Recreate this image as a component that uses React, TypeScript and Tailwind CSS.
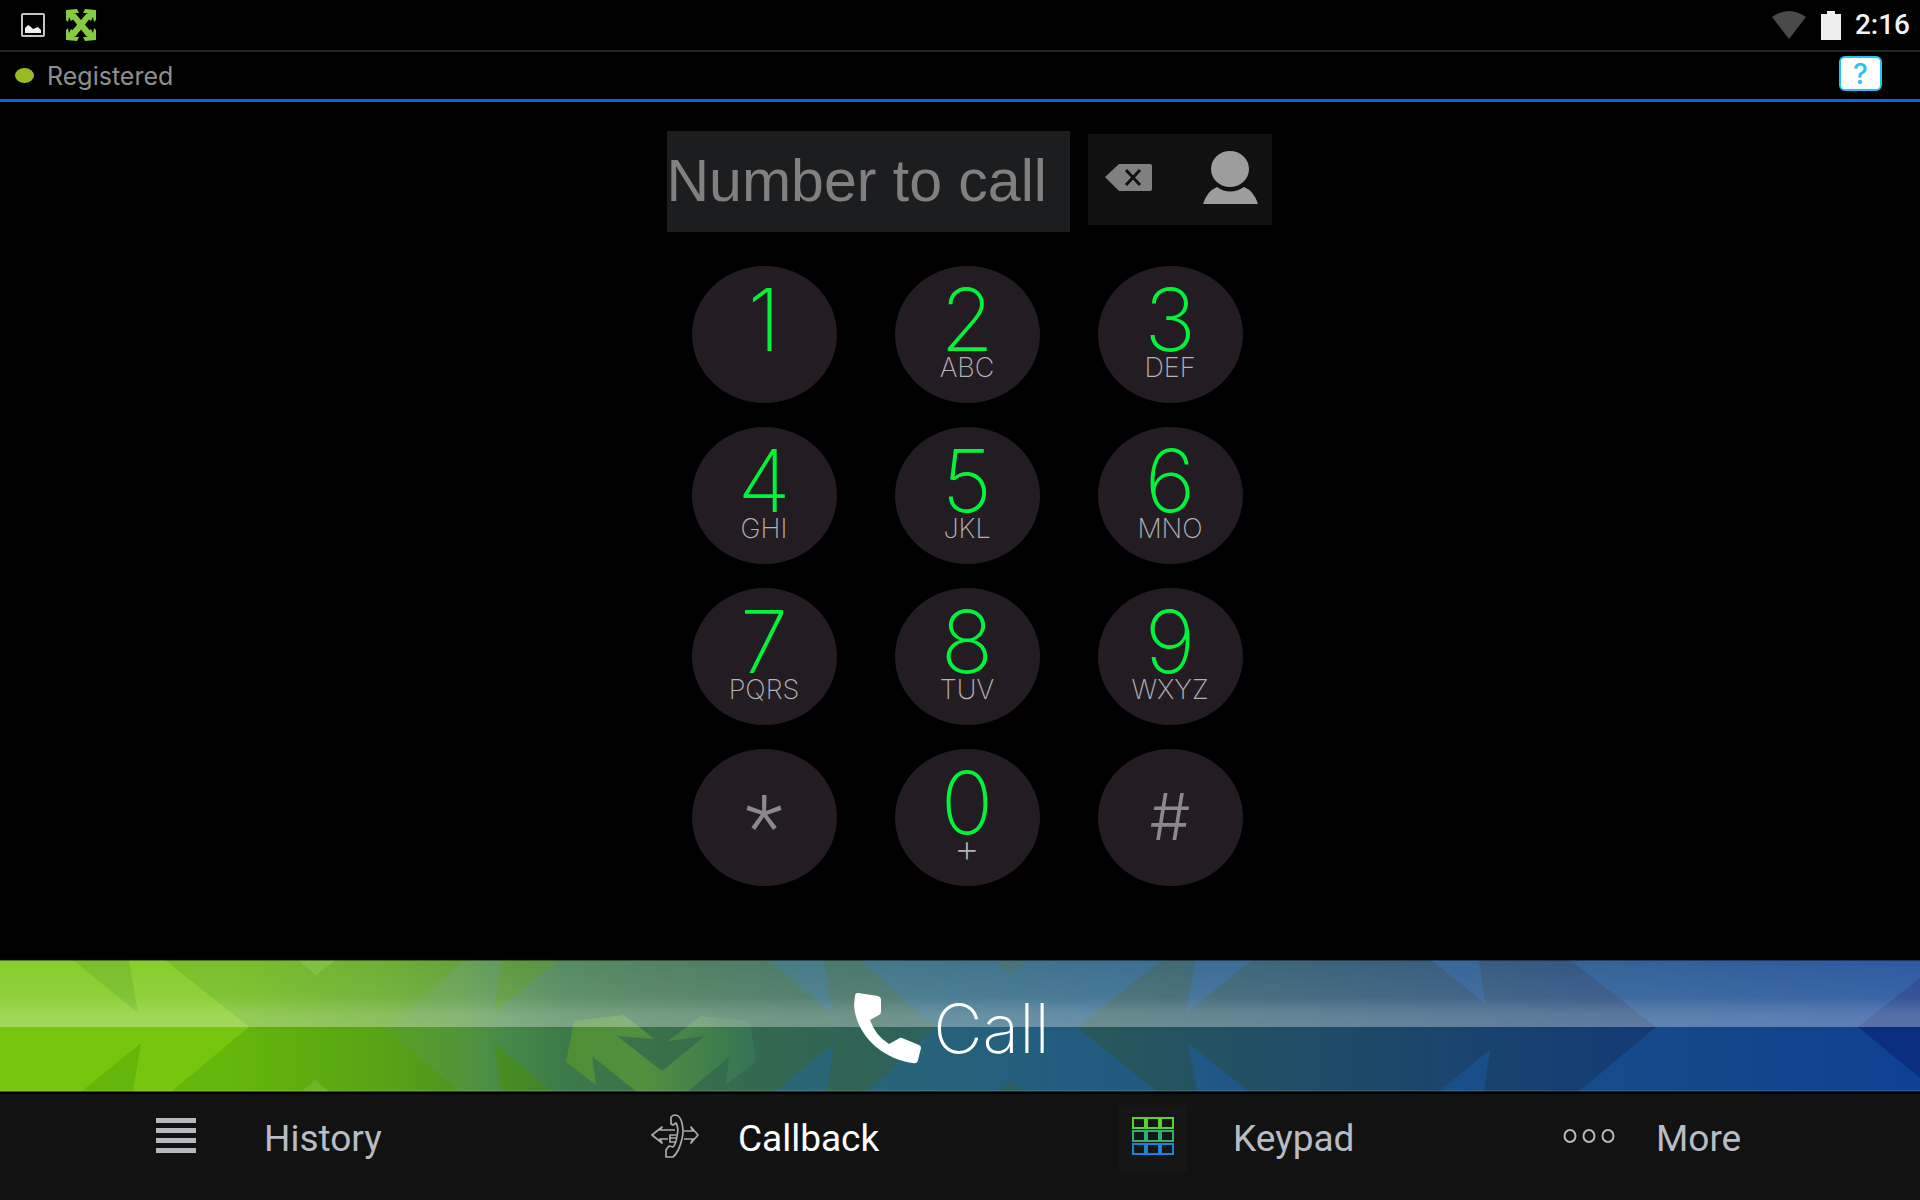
import React from 'react';

interface DialKey {
  digit: string;
  letters?: string;
}

const dialKeys: DialKey[] = [
  { digit: '1' },
  { digit: '2', letters: 'ABC' },
  { digit: '3', letters: 'DEF' },
  { digit: '4', letters: 'GHI' },
  { digit: '5', letters: 'JKL' },
  { digit: '6', letters: 'MNO' },
  { digit: '7', letters: 'PQRS' },
  { digit: '8', letters: 'TUV' },
  { digit: '9', letters: 'WXYZ' },
  { digit: '*' },
  { digit: '0', letters: '+' },
  { digit: '#' }
];

const ScreenshotIcon = () => (
  <svg className="w-6 h-6" viewBox="0 0 24 24" fill="none">
    <rect x="1" y="1" width="22" height="22" rx="1" stroke="#c4c4c4" strokeWidth="2" />
    <path d="M4 20V15L7 12L10 14L12 16L17 14L20 17V20Z" fill="#f0f0f0" />
  </svg>
);

const AppLogo = () => (
  <svg className="w-[30px] h-8" viewBox="0 0 30 32">
    <g fill="#86cb45">
      <path d="M5 8L9 4L26 24L21 28Z" />
      <path d="M25 8L21 4L4 24L9 28Z" />
      <path d="M0 1L11 0L13 4L8 4L10 8L5 12L3 8L2 13L0 11Z" />
      <path d="M30 1L19 0L17 4L22 4L20 8L25 12L27 8L28 13L30 11Z" />
      <path d="M0 31L11 32L13 28L8 28L10 24L5 20L3 24L2 19L0 21Z" />
      <path d="M30 31L19 32L17 28L22 28L20 24L25 20L27 24L28 19L30 21Z" />
    </g>
  </svg>
);

const WifiIcon = () => (
  <svg className="w-[34px] h-7" viewBox="0 0 34 28">
    <path d="M0 6Q17 -6 34 6L17 28Z" fill="#4a4a4a" />
  </svg>
);

const BatteryIcon = () => (
  <svg className="w-5 h-[29px]" viewBox="0 0 20 29">
    <path d="M6 0H14V3H20V29H0V3H6Z" fill="#eeeeee" />
  </svg>
);

const BackspaceIcon = () => (
  <svg className="w-12 h-7" viewBox="0 0 48 28">
    <path d="M14 0H45Q47 0 47 2V25Q47 27 45 27H14L0 13Z" fill="#808080" />
    <path d="M21 6L35 21M35 6L21 21" stroke="#111111" strokeWidth="3" />
  </svg>
);

const ContactIcon = () => (
  <svg className="w-14 h-[54px]" viewBox="0 0 56 54">
    <path d="M0 53Q4 40 14 36Q27 45 41 36Q51 40 55 53Z" fill="#9d9d9d" />
    <ellipse cx="27" cy="18" rx="19" ry="18" fill="#9d9d9d" />
  </svg>
);

const HandsetIcon = () => (
  <svg className="w-[67px] h-[71px]" viewBox="0 0 67 71">
    <path
      d="M4 0L24 3Q27 4 27 7V19Q27 21 25 22L16 27Q21 42 35 51L44 46Q46 44 48 45L65 52Q67 53 67 55L64 67Q63 71 59 70C28 66 2 42 0 12L1 3Q1 0 4 0Z"
      fill="#ffffff"
    />
  </svg>
);

const HistoryIcon = () => (
  <svg className="w-10 h-9" viewBox="0 0 40 36" fill="#b4b8bf">
    <rect y="0" width="40" height="5" />
    <rect y="10" width="40" height="5" />
    <rect y="20" width="40" height="5" />
    <rect y="30" width="40" height="5" />
  </svg>
);

const CallbackIcon = () => (
  <svg className="w-12 h-11" viewBox="0 0 48 44" fill="none" stroke="#a9abae" strokeWidth="1.7" strokeLinejoin="round">
    <path d="M20 10V3Q22 1 24 1Q29 1 31 9Q33 18 31 25Q28 38 22 43H15V36L18 32L22 33Q25 30 26 22Q28 14 25 9L22 11Z" />
    <path d="M24 16H9L11 13L1 21L11 29L9 25H17" />
    <path d="M25 21H19V28H24M18 24H25" />
    <path d="M33 17H42L40 13L47 21L40 29L42 25H33" />
  </svg>
);

const KeypadIcon = () => {
  const rows = [
    { y: 1, color: '#55d52b' },
    { y: 14, color: '#2fae78' },
    { y: 27, color: '#1d83d8' }
  ];
  return (
    <svg className="w-[42px] h-[38px]" viewBox="0 0 42 38" fill="none" strokeWidth="2">
      {rows.map((row) =>
        [1, 15, 29].map((x) => (
          <rect key={`${x}-${row.y}`} x={x} y={row.y} width="12" height="10" stroke={row.color} />
        ))
      )}
    </svg>
  );
};

const MoreIcon = () => (
  <svg className="w-[52px] h-4" viewBox="0 0 52 16" fill="none" stroke="#b4b8bf" strokeWidth="2">
    <ellipse cx="7" cy="8" rx="5.5" ry="6" />
    <ellipse cx="26" cy="8" rx="5.5" ry="6" />
    <ellipse cx="45" cy="8" rx="5.5" ry="6" />
  </svg>
);

// Arrow artwork behind the call button
const CallBackdrop = () => (
  <svg className="absolute inset-0 w-full h-full" viewBox="0 0 1920 132" preserveAspectRatio="none">
    <defs>
      <linearGradient id="base" gradientUnits="userSpaceOnUse" x1="0" x2="1920" y1="0" y2="0">
        <stop offset="0.12" stopColor="#65b60a" />
        <stop offset="0.2" stopColor="#57a316" />
        <stop offset="0.28" stopColor="#438627" />
        <stop offset="0.41" stopColor="#2b6874" />
        <stop offset="0.57" stopColor="#215b80" />
        <stop offset="0.65" stopColor="#1f5688" />
        <stop offset="0.86" stopColor="#144a8a" />
        <stop offset="1" stopColor="#0e4193" />
      </linearGradient>
      <linearGradient id="middle" gradientUnits="userSpaceOnUse" x1="383" x2="936" y1="0" y2="0">
        <stop offset="0" stopColor="#58a021" />
        <stop offset="0.14" stopColor="#529539" />
        <stop offset="0.22" stopColor="#478948" />
        <stop offset="0.33" stopColor="#3c7a4a" />
        <stop offset="0.5" stopColor="#39704a" />
        <stop offset="0.75" stopColor="#316651" />
        <stop offset="1" stopColor="#2d615d" />
      </linearGradient>
      <linearGradient id="right" gradientUnits="userSpaceOnUse" x1="1077" x2="1656" y1="0" y2="0">
        <stop offset="0" stopColor="#27595a" />
        <stop offset="0.35" stopColor="#204e66" />
        <stop offset="1" stopColor="#133a75" />
      </linearGradient>
      <linearGradient id="mark" gradientUnits="userSpaceOnUse" x1="566" x2="756" y1="0" y2="0">
        <stop offset="0" stopColor="#4f8f33" />
        <stop offset="0.4" stopColor="#52903f" />
        <stop offset="1" stopColor="#347355" />
      </linearGradient>
      <linearGradient id="gloss" x1="0" x2="0" y1="0" y2="1">
        <stop offset="0" stopColor="#ffffff" stopOpacity="0.13" />
        <stop offset="0.55" stopColor="#ffffff" stopOpacity="0.18" />
        <stop offset="0.8" stopColor="#ffffff" stopOpacity="0.3" />
        <stop offset="1" stopColor="#ffffff" stopOpacity="0.32" />
      </linearGradient>
    </defs>
    <rect width="1920" height="132" fill="url(#base)" />
    <path d="M0 0H73L138 53L129 0H165L249 67L171 132H133L141 83L81 132H0Z" fill="#76c60f" />
    <path d="M298 0H336L316 15ZM301 132H330L315 120Z" fill="#6db625" />
    <path
      d="M383 67L466 0H501L494 53L558 0H768L832 53L825 0H860L936 67L866 132H827L834 83L774 132H553L494 83L501 132H461Z"
      fill="url(#middle)"
    />
    <path d="M994 0H1029L1011 15ZM997 132H1024L1010 120Z" fill="#2b5f63" />
    <path
      d="M1077 67L1162 0H1195L1186 53L1252 0H1431L1485 43L1479 0H1570L1656 67L1578 132H1484L1490 90L1438 132H1249L1188 83L1197 132H1157Z"
      fill="url(#right)"
    />
    <path d="M1858 67L1920 18V118Z" fill="#0a2f80" />
    <path
      d="M566 102L574 61L624 55L654 79L617 76L662 111L705 76L668 81L701 56L750 61L756 101L726 125L729 97L687 132H637L592 96L596 125Z"
      fill="url(#mark)"
    />
    <rect width="1920" height="67" fill="url(#gloss)" />
    <rect width="1920" height="1" fill="#000000" fillOpacity="0.4" />
    <rect y="130" width="1920" height="1" fill="#ffffff" fillOpacity="0.1" />
    <rect y="131" width="1920" height="1" fill="#000000" fillOpacity="0.5" />
  </svg>
);

const DialKeyLabel = ({ digit, letters }: DialKey) => {
  if (digit === '*') {
    return <span className="pt-[22px] font-['Roboto',sans-serif] font-light text-[88px] leading-[112px] text-[#8a8a8a]">*</span>;
  }
  if (digit === '#') {
    return <span className="pt-9 font-light text-[64px] leading-[64px] text-[#8a8a8a]">#</span>;
  }
  return (
    <>
      <span className="pt-[14px] font-extralight text-[87px] leading-[80px] text-[#00f53a]">{digit}</span>
      {letters === '+' && <span className="font-extralight text-[40px] leading-[10px] text-[#b5b2b5]">+</span>}
      {letters && letters !== '+' && (
        <span className="font-extralight text-[27px] leading-4 text-[#b5b2b5]">{letters}</span>
      )}
    </>
  );
};

const navItems = [
  { label: 'History', icon: <HistoryIcon />, offset: 'pl-[142px]', gap: 'gap-[54px]', color: 'text-[#b9bcc4]', tile: '' },
  { label: 'Callback', icon: <CallbackIcon />, offset: 'pl-[161px]', gap: 'gap-[29px]', color: 'text-white', tile: '' },
  { label: 'Keypad', icon: <KeypadIcon />, offset: 'pl-[159px]', gap: 'gap-[46px]', color: 'text-[#b9bcc4]', tile: 'bg-[#161616]' },
  { label: 'More', icon: <MoreIcon />, offset: 'pl-[115px]', gap: 'gap-[33px]', color: 'text-[#b9bcc4]', tile: '' }
];

const App: React.FC = () => {
  return (
    <div className="min-h-screen flex flex-col bg-black font-['Inter',sans-serif]">
      {/* System status bar */}
      <header className="h-[52px] flex items-center justify-between border-b-2 border-[#20272a] pl-[21px] pr-[10px]">
        <div className="flex items-center gap-[21px]">
          <ScreenshotIcon />
          <AppLogo />
        </div>
        <div className="flex items-center">
          <WifiIcon />
          <div className="ml-[15px]">
            <BatteryIcon />
          </div>
          <span className="ml-[14px] font-['Roboto',sans-serif] font-medium text-[28px] leading-8 text-[#f2f2f2]">2:16</span>
        </div>
      </header>

      {/* Registration state */}
      <div className="h-[50px] flex items-center justify-between border-b-3 border-[#0863ee] pl-[15px] pr-[38px]">
        <div className="flex items-center gap-[13px]">
          <span className="w-[19px] h-[15px] rounded-[50%] bg-[#97bb22]" />
          <span className="text-[25px] leading-8 text-[#8f8f8f]">Registered</span>
        </div>
        <button
          type="button"
          aria-label="Help"
          className="mb-1 w-[43px] h-[35px] flex items-center justify-center rounded-md border-2 border-[#22c3f5] bg-white text-[28px] leading-8 font-medium text-[#20c4f4]"
        >
          ?
        </button>
      </div>

      <main className="flex-grow flex flex-col items-center pt-[29px] pl-[18px]">
        <div className="flex items-start gap-[18px]">
          <input
            type="text"
            aria-label="Number to call"
            placeholder="Number to call"
            className="w-[403px] h-[101px] pb-[2px] bg-[#1c1d1f] font-['Liberation_Sans',sans-serif] text-[59px] text-[#808080] placeholder:text-[#808080] outline-none"
          />
          <div className="mt-[3px] w-[184px] h-[91px] flex items-center justify-between pl-[17px] pr-[13px] pb-[3px] bg-[#111111]">
            <button type="button" aria-label="Delete">
              <BackspaceIcon />
            </button>
            <button type="button" aria-label="Contacts">
              <ContactIcon />
            </button>
          </div>
        </div>

        <div className="mt-[34px] mr-1 grid grid-cols-3 gap-x-[58px] gap-y-6">
          {dialKeys.map((key) => (
            <button
              key={key.digit}
              type="button"
              className="w-[145px] h-[137px] rounded-[50%] bg-[#231d23] flex flex-col items-center justify-start"
            >
              <DialKeyLabel {...key} />
            </button>
          ))}
        </div>
      </main>

      <button type="button" className="relative w-full h-[132px] flex items-center justify-center pt-1 pr-4">
        <CallBackdrop />
        <span className="relative flex items-center gap-3">
          <HandsetIcon />
          <span className="font-extralight text-[68px] leading-[72px] text-white">Call</span>
        </span>
      </button>

      {/* Bottom navigation */}
      <nav className="h-[108px] grid grid-cols-4 border-t-2 border-black bg-[#121212]">
        {navItems.map((item) => (
          <button
            key={item.label}
            type="button"
            className={`flex items-start pt-[11px] ${item.offset} ${item.gap} ${item.color}`}
          >
            <span className={`w-[68px] h-[68px] flex shrink-0 items-center justify-center pb-[6px] ${item.tile}`}>{item.icon}</span>
            <span className="font-['Roboto',sans-serif] text-[37px] leading-[68px]">{item.label}</span>
          </button>
        ))}
      </nav>
    </div>
  );
};

export default App;
